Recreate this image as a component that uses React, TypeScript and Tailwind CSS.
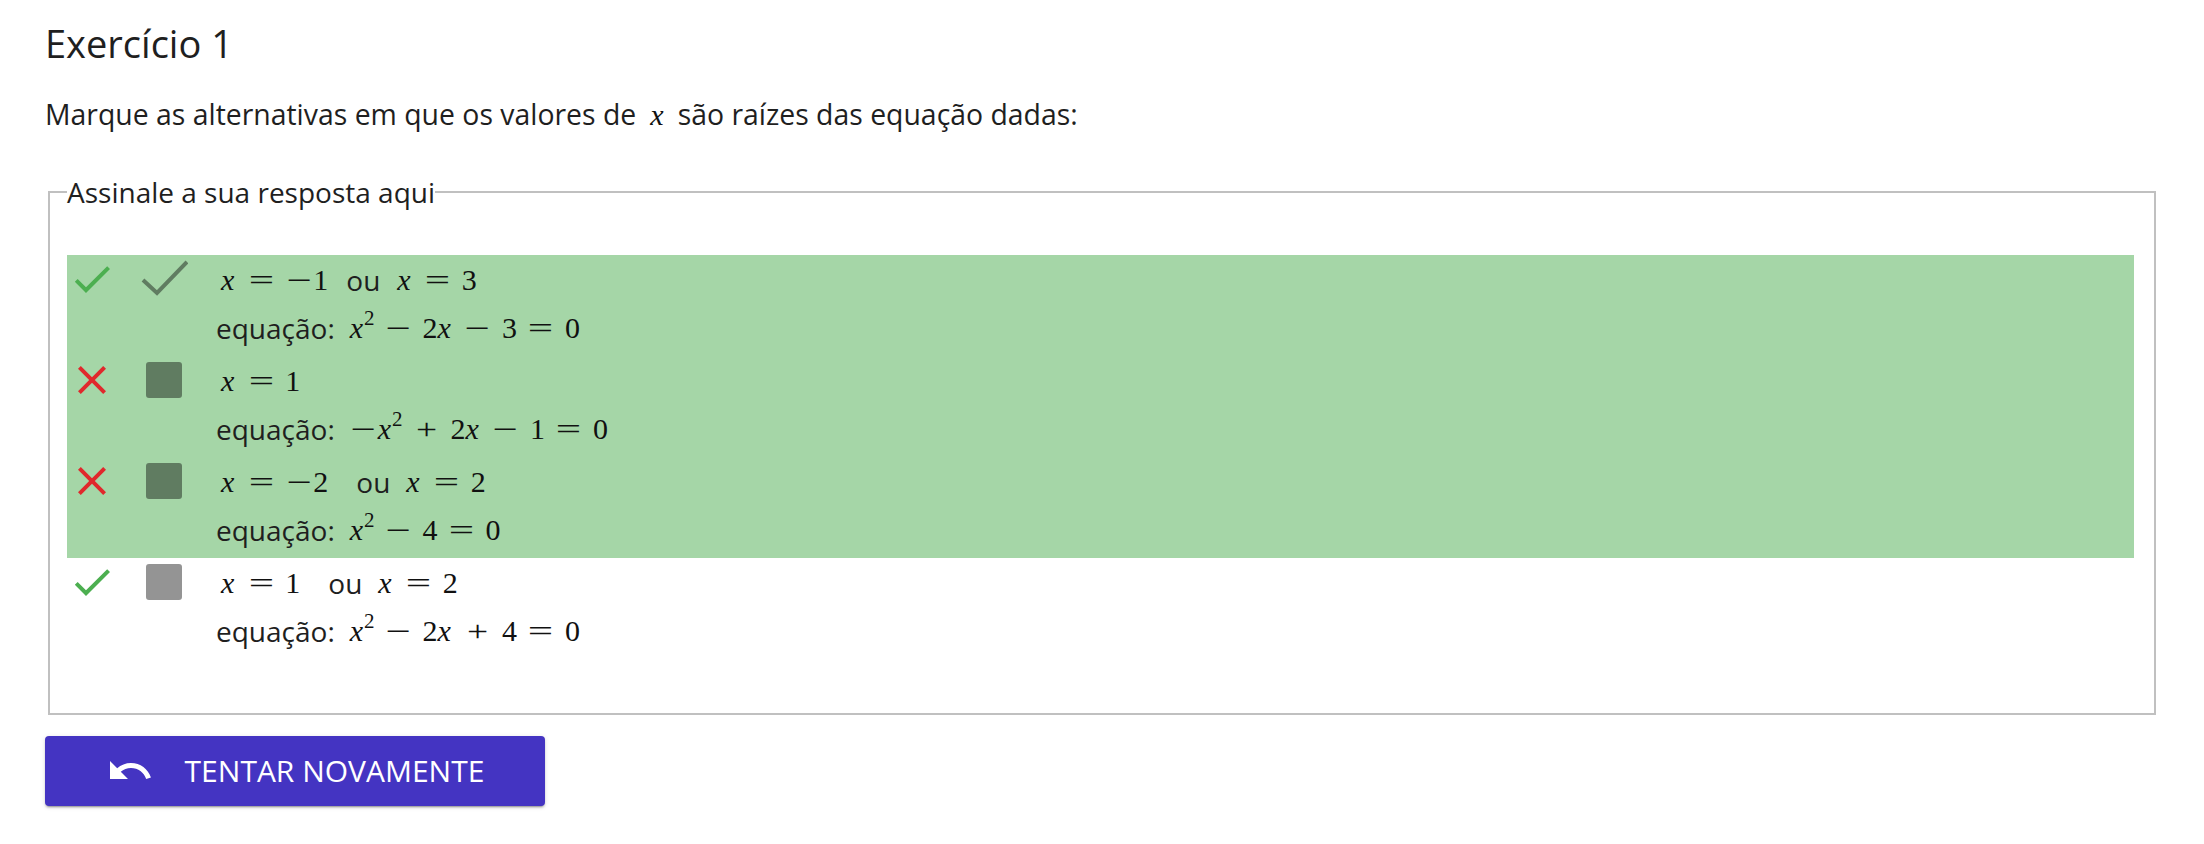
import React from "react";

const MATH = "font-['Liberation_Serif',serif] text-[30px] leading-[40px] text-[#111]";

function X({ tight }: { tight?: boolean }) {
  return <span className={tight ? "italic pr-[1px]" : "italic pr-[3px]"}>x</span>;
}
function Rel({ c }: { c: string }) {
  return (
    <span className="inline-block mx-[10px] w-[28px] text-center">
      <span className="inline-block scale-x-[1.5]">{c}</span>
    </span>
  );
}
function Bin({ c }: { c: string }) {
  return (
    <span className="inline-block mx-[10px] w-[28px] text-center">
      <span className={c === "+" ? "inline-block scale-x-[1.25]" : "inline-block scale-x-[1.5]"}>{c}</span>
    </span>
  );
}
function Neg() {
  return (
    <span className="inline-block w-[28px] text-center">
      <span className="inline-block scale-x-[1.5]">−</span>
    </span>
  );
}
function Sq() {
  return <span className="text-[21px] leading-[0px] align-[13px]">2</span>;
}
function N({ c }: { c: string }) {
  return <span>{c}</span>;
}
function M({ children }: { children: React.ReactNode }) {
  return <span className={MATH + " whitespace-nowrap"}>{children}</span>;
}

function GreenCheck() {
  return (
    <svg width="48" height="48" viewBox="0 0 24 24">
      <path fill="#4caf50" d="M9 16.17L4.83 12l-1.42 1.41L9 19 21 7l-1.41-1.41z" />
    </svg>
  );
}
function RedX() {
  return (
    <svg width="48" height="48" viewBox="0 0 24 24">
      <path
        fill="#e0282c"
        d="M19 6.41L17.59 5 12 10.59 6.41 5 5 6.41 10.59 12 5 17.59 6.41 19 12 13.41 17.59 19 19 17.59 13.41 12z"
      />
    </svg>
  );
}
function BoxIcon() {
  return (
    <svg width="48" height="48" viewBox="0 0 48 48">
      <rect x="6" y="6" width="36" height="36" rx="3" fill="rgba(0,0,0,0.42)" />
    </svg>
  );
}
function BigCheck() {
  return (
    <svg width="48" height="48" viewBox="0 0 48 48">
      <polyline points="3,25 17,38 47,7" fill="none" stroke="rgba(0,0,0,0.42)" strokeWidth="4" />
    </svg>
  );
}
function UndoIcon() {
  return (
    <svg width="48" height="48" viewBox="0 0 24 24">
      <path
        fill="#ffffff"
        d="M12.5 8c-2.65 0-5.05.99-6.9 2.6L2 7v9h9l-3.62-3.62c1.39-1.16 3.16-1.88 5.12-1.88 3.54 0 6.55 2.31 7.6 5.5l2.37-.78C21.08 11.03 17.15 8 12.5 8z"
      />
    </svg>
  );
}

function Row({
  status,
  box,
  line1,
  line2,
}: {
  status: "ok" | "bad";
  box: "check" | "square";
  line1: React.ReactNode;
  line2: React.ReactNode;
}) {
  return (
    <div className="flex h-[101px]">
      <div className="ml-[1px] w-[48px] h-[48px] shrink-0">
        {status === "ok" ? <GreenCheck /> : <RedX />}
      </div>
      <div className="ml-[24px] w-[48px] h-[48px] shrink-0">
        {box === "check" ? <BigCheck /> : <BoxIcon />}
      </div>
      <div className="ml-[28px] flex flex-col">
        <div className="h-[50px] flex items-center pl-[5px] whitespace-nowrap">{line1}</div>
        <div className="h-[46px] flex items-center whitespace-nowrap">
          <span className="mr-[15px]">equação:</span>
          {line2}
        </div>
      </div>
    </div>
  );
}

function Ou({ wide }: { wide?: boolean }) {
  return <span className={wide ? "ml-[28px] mr-[16px]" : "ml-[18px] mr-[17px]"}>ou</span>;
}

export default function App() {
  return (
    <div className="min-h-[844px] bg-white text-[#1f1f1f] font-['Open_Sans','Noto_Sans',sans-serif] pl-[45px]">
      <h1 className="pt-[17px] text-[38px] leading-[52px] font-normal">Exercício 1</h1>
      <p className="mt-[25px] text-[28.4px] leading-[40px]">
        Marque as alternativas em que os valores de
        <span className={MATH + " italic mx-[14px]"}>x</span>
        são raízes das equação dadas:
      </p>
      <fieldset className="mt-[39px] ml-[3px] w-[2108px] border-2 border-[#c0c0c0] pl-[17px] pr-[20px] pb-[54px]">
        <legend className="text-[28px] leading-[36px] px-0">Assinale a sua resposta aqui</legend>
        <div className="mt-[45px] text-[28px] leading-[40px]">
          <div className="bg-[#a5d6a7]">
            <Row
              status="ok"
              box="check"
              line1={
                <>
                  <M>
                    <X />
                    <Rel c="=" />
                    <Neg />
                    <N c="1" />
                  </M>
                  <Ou />
                  <M>
                    <X />
                    <Rel c="=" />
                    <N c="3" />
                  </M>
                </>
              }
              line2={
                <M>
                  <X tight />
                  <Sq />
                  <Bin c="−" />
                  <N c="2" />
                  <X />
                  <Bin c="−" />
                  <N c="3" />
                  <Rel c="=" />
                  <N c="0" />
                </M>
              }
            />
            <Row
              status="bad"
              box="square"
              line1={
                <M>
                  <X />
                  <Rel c="=" />
                  <N c="1" />
                </M>
              }
              line2={
                <M>
                  <Neg />
                  <X tight />
                  <Sq />
                  <Bin c="+" />
                  <N c="2" />
                  <X />
                  <Bin c="−" />
                  <N c="1" />
                  <Rel c="=" />
                  <N c="0" />
                </M>
              }
            />
            <Row
              status="bad"
              box="square"
              line1={
                <>
                  <M>
                    <X />
                    <Rel c="=" />
                    <Neg />
                    <N c="2" />
                  </M>
                  <Ou wide />
                  <M>
                    <X />
                    <Rel c="=" />
                    <N c="2" />
                  </M>
                </>
              }
              line2={
                <M>
                  <X tight />
                  <Sq />
                  <Bin c="−" />
                  <N c="4" />
                  <Rel c="=" />
                  <N c="0" />
                </M>
              }
            />
          </div>
          <Row
            status="ok"
            box="square"
            line1={
              <>
                <M>
                  <X />
                  <Rel c="=" />
                  <N c="1" />
                </M>
                <Ou wide />
                <M>
                  <X />
                  <Rel c="=" />
                  <N c="2" />
                </M>
              </>
            }
            line2={
              <M>
                <X tight />
                <Sq />
                <Bin c="−" />
                <N c="2" />
                <X />
                <Bin c="+" />
                <N c="4" />
                <Rel c="=" />
                <N c="0" />
              </M>
            }
          />
        </div>
      </fieldset>
      <button className="mt-[21px] w-[500px] h-[70px] flex items-center justify-center gap-[31px] bg-[#4434c2] rounded-[4px] shadow-[0_3px_1px_-2px_rgba(0,0,0,0.2),0_2px_2px_0_rgba(0,0,0,0.14),0_1px_5px_0_rgba(0,0,0,0.12)] text-white text-[30px] leading-[40px] uppercase">
        <UndoIcon />
        <span>Tentar novamente</span>
      </button>
    </div>
  );
}
